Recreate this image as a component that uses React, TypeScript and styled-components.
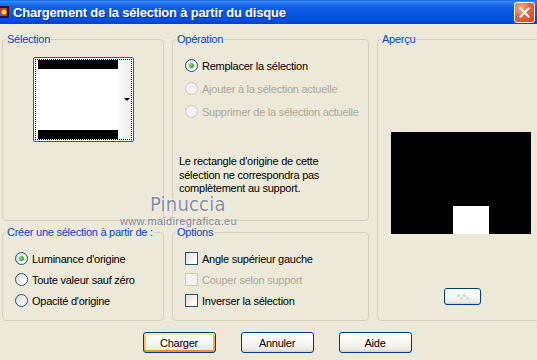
import React from 'react'
import styled, { createGlobalStyle } from 'styled-components'

const GlobalStyle = createGlobalStyle`
  html, body {
    margin: 0;
    padding: 0;
    background: #ece9d8;
  }
  body {
    width: 537px;
    height: 360px;
    overflow: hidden;
    font-family: 'Liberation Sans', Arial, sans-serif;
    font-size: 11px;
    letter-spacing: -0.25px;
    color: #000;
  }
`

const Window = styled.div`
  position: relative;
  width: 554px;
  height: 360px;
  background: #ece9d8;
`

const TitleBar = styled.div`
  height: 24px;
  display: flex;
  align-items: center;
  padding-right: 19px;
  background: linear-gradient(
    to bottom,
    #0a5bdc 0%,
    #3d8bf5 5%,
    #2a76f0 12%,
    #0f5fe5 30%,
    #0755e0 60%,
    #0050dc 85%,
    #0042c2 100%
  );
`

const AppIcon = styled.svg`
  flex: none;
  width: 16px;
  height: 16px;
  margin-left: -6px;
`

const Title = styled.div`
  flex: 1;
  margin-left: 3px;
  color: #fff;
  font: bold 13px 'Liberation Sans', Arial, sans-serif;
  letter-spacing: -0.2px;
  text-shadow: 1px 1px 0 #0b2a9a;
  white-space: nowrap;
`

const CloseButton = styled.div`
  flex: none;
  width: 21px;
  height: 21px;
  box-sizing: border-box;
  border: 1px solid #fff;
  border-radius: 3px;
  background: radial-gradient(circle at 30% 25%, #f5ad94 0%, #e66c46 40%, #d3421a 100%);
  display: flex;
  align-items: center;
  justify-content: center;
`

const Body = styled.div`
  display: grid;
  grid-template-columns: 162px 197px 168px;
  grid-template-rows: 188px 95px;
  column-gap: 8px;
  row-gap: 5px;
  padding: 9px 0 0 2px;
`

const Group = styled.fieldset<{ $tall?: boolean }>`
  margin: 0;
  padding: 0;
  min-width: 0;
  border: 1px solid #d0d0bf;
  border-radius: 4px;
  ${p => p.$tall && 'grid-column: 3; grid-row: 1 / span 2;'}
`

const Legend = styled.legend`
  margin-left: 3px;
  padding: 0 1px;
  color: #0046d5;
  font-size: 11px;
  line-height: 13px;
`

const GroupBody = styled.div<{ $top: number; $left: number }>`
  padding: ${p => p.$top}px 0 0 ${p => p.$left}px;
`

const Combo = styled.div`
  width: 101px;
  height: 85px;
  box-sizing: border-box;
  margin: 0 auto;
  padding: 1px;
  border: 1px solid #2b5c8e;
  border-radius: 2px;
  background: #fff;
  display: flex;
`

const FocusFrame = styled.div`
  flex: 1;
  display: flex;
  border: 1px dotted #000;
`

const Swatch = styled.div`
  width: 80px;
  padding-left: 2px;
  display: flex;
  flex-direction: column;
  justify-content: space-between;
`

const SwatchBar = styled.div`
  height: 9px;
  background: #000;
`

const DropColumn = styled.div`
  flex: 1;
  display: flex;
  align-items: center;
  justify-content: flex-end;
  padding-right: 1px;
  background: linear-gradient(to right, #fbfbfa, #ecebe6);
`

const DropArrow = styled.span`
  width: 0;
  height: 0;
  border-left: 3px solid transparent;
  border-right: 3px solid transparent;
  border-top: 3px solid #000;
`

const OptionRow = styled.div<{ $h: number; $disabled?: boolean }>`
  display: flex;
  align-items: center;
  gap: 4px;
  height: ${p => p.$h}px;
  color: ${p => (p.$disabled ? '#aca899' : '#000')};
  white-space: nowrap;
`

const RadioMark = styled.span<{ $checked?: boolean; $disabled?: boolean }>`
  flex: none;
  width: 13px;
  height: 13px;
  box-sizing: border-box;
  border-radius: 50%;
  border: 1px solid ${p => (p.$disabled ? '#cac8bb' : '#1c5180')};
  background: ${p => (p.$disabled ? '#f4f3ee' : 'linear-gradient(135deg, #dcdcd7 0%, #fff 80%)')};
  display: flex;
  align-items: center;
  justify-content: center;
  &::after {
    content: '';
    display: ${p => (p.$checked ? 'block' : 'none')};
    width: 5px;
    height: 5px;
    border-radius: 50%;
    background: radial-gradient(circle at 35% 35%, #7be477 0%, #21a121 75%);
  }
`

const CheckMark = styled.span<{ $disabled?: boolean }>`
  flex: none;
  width: 13px;
  height: 13px;
  box-sizing: border-box;
  border: 1px solid ${p => (p.$disabled ? '#cac8bb' : '#1c5180')};
  background: ${p => (p.$disabled ? '#f4f3ee' : 'linear-gradient(135deg, #dcdcd7 0%, #fff 85%)')};
`

const Notice = styled.p`
  margin: 32px 0 0 -6px;
  line-height: 13.5px;
  white-space: nowrap;
`

const PreviewCanvas = styled.div`
  width: 140px;
  height: 102px;
  box-sizing: border-box;
  margin: 86px auto 0;
  padding-left: 62px;
  background: #000;
  display: flex;
  align-items: flex-end;
`

const PreviewShape = styled.div`
  width: 36px;
  height: 28px;
  background: #fff;
`

const PushButton = styled.button<{ $default?: boolean; $w?: number; $h?: number }>`
  width: ${p => p.$w ?? 73}px;
  height: ${p => p.$h ?? 21}px;
  box-sizing: border-box;
  padding: 0;
  border: 1px solid #003c74;
  border-radius: 3px;
  background: linear-gradient(to bottom, #fff 0%, #f7f7f4 45%, #ecebe6 85%, #d6d0c5 100%);
  font: 11px 'Liberation Sans', Arial, sans-serif;
  letter-spacing: -0.25px;
  color: #000;
  display: flex;
  align-items: center;
  justify-content: center;
  box-shadow: ${p =>
    p.$default
      ? 'inset 0 2px 0 #ffe7a2, inset 0 -2px 0 #e5973e, inset 2px 0 0 #f8c46a, inset -2px 0 0 #f0ad4e'
      : 'none'};
`

const MiniButtonWrap = styled.div`
  display: flex;
  justify-content: center;
  margin-top: 54px;
  padding-left: 3px;
`

const ButtonRow = styled.div`
  display: flex;
  justify-content: center;
  gap: 25px;
  margin-top: 11px;
`

const Watermark = styled.div`
  position: absolute;
  left: 120px;
  top: 193px;
  display: flex;
  flex-direction: column;
  pointer-events: none;
`

const WatermarkName = styled.div`
  margin-left: 30px;
  font: 20px 'Liberation Sans Narrow', 'DejaVu Sans Condensed', sans-serif;
  line-height: 22px;
  letter-spacing: 0.2px;
  color: #868aa5;
  text-shadow: 0 0 2px #fff, 0 0 1px #fff;
`

const WatermarkUrl = styled.div`
  font: 11px 'Liberation Sans', Arial, sans-serif;
  line-height: 12px;
  letter-spacing: 0.3px;
  color: #7d8198;
  text-shadow: 0 0 1px #fff;
`

const App: React.FC = () => {
  return (
    <Window>
      <GlobalStyle />
      <TitleBar>
        <AppIcon viewBox="0 0 16 16">
          <rect x="1" y="2" width="14" height="12" fill="#1b1b2e" />
          <rect x="3" y="4" width="10" height="8" fill="#c33b2b" />
          <circle cx="10" cy="8" r="2.5" fill="#f2d34b" />
          <rect x="3" y="9" width="5" height="3" fill="#3a6fd8" />
        </AppIcon>
        <Title>Chargement de la sélection à partir du disque</Title>
        <CloseButton>
          <svg width="11" height="11" viewBox="0 0 11 11">
            <path d="M1.5 1.5 L9.5 9.5 M9.5 1.5 L1.5 9.5" stroke="#fff" strokeWidth="2" strokeLinecap="square" />
          </svg>
        </CloseButton>
      </TitleBar>

      <Body>
        <Group>
          <Legend>Sélection</Legend>
          <GroupBody $top={11} $left={0}>
            <Combo>
              <FocusFrame>
                <Swatch>
                  <SwatchBar />
                  <SwatchBar />
                </Swatch>
                <DropColumn>
                  <DropArrow />
                </DropColumn>
              </FocusFrame>
            </Combo>
          </GroupBody>
        </Group>

        <Group>
          <Legend>Opération</Legend>
          <GroupBody $top={8} $left={12}>
            <OptionRow $h={23}>
              <RadioMark $checked />
              Remplacer la sélection
            </OptionRow>
            <OptionRow $h={23} $disabled>
              <RadioMark $disabled />
              Ajouter à la sélection actuelle
            </OptionRow>
            <OptionRow $h={23} $disabled>
              <RadioMark $disabled />
              Supprimer de la sélection actuelle
            </OptionRow>
            <Notice>
              Le rectangle d'origine de cette
              <br />
              sélection ne correspondra pas
              <br />
              complètement au support.
            </Notice>
          </GroupBody>
        </Group>

        <Group $tall>
          <Legend>Aperçu</Legend>
          <PreviewCanvas>
            <PreviewShape />
          </PreviewCanvas>
          <MiniButtonWrap>
            <PushButton $w={37} $h={17} aria-label="Fond">
              <svg width="12" height="6" viewBox="0 0 12 6">
                <rect x="0" y="0" width="3" height="3" fill="#dcdcd6" />
                <rect x="6" y="0" width="3" height="3" fill="#dcdcd6" />
                <rect x="3" y="3" width="3" height="3" fill="#dcdcd6" />
                <rect x="9" y="3" width="3" height="3" fill="#dcdcd6" />
              </svg>
            </PushButton>
          </MiniButtonWrap>
        </Group>

        <Group>
          <Legend>Créer une sélection à partir de :</Legend>
          <GroupBody $top={9} $left={12}>
            <OptionRow $h={21}>
              <RadioMark $checked />
              Luminance d'origine
            </OptionRow>
            <OptionRow $h={21}>
              <RadioMark />
              Toute valeur sauf zéro
            </OptionRow>
            <OptionRow $h={21}>
              <RadioMark />
              Opacité d'origine
            </OptionRow>
          </GroupBody>
        </Group>

        <Group>
          <Legend>Options</Legend>
          <GroupBody $top={9} $left={12}>
            <OptionRow $h={21}>
              <CheckMark />
              Angle supérieur gauche
            </OptionRow>
            <OptionRow $h={21} $disabled>
              <CheckMark $disabled />
              Couper selon support
            </OptionRow>
            <OptionRow $h={21}>
              <CheckMark />
              Inverser la sélection
            </OptionRow>
          </GroupBody>
        </Group>
      </Body>

      <ButtonRow>
        <PushButton $default>Charger</PushButton>
        <PushButton>Annuler</PushButton>
        <PushButton>Aide</PushButton>
      </ButtonRow>

      <Watermark>
        <WatermarkName>Pinuccia</WatermarkName>
        <WatermarkUrl>www.maidiregrafica.eu</WatermarkUrl>
      </Watermark>
    </Window>
  )
}

export default App
